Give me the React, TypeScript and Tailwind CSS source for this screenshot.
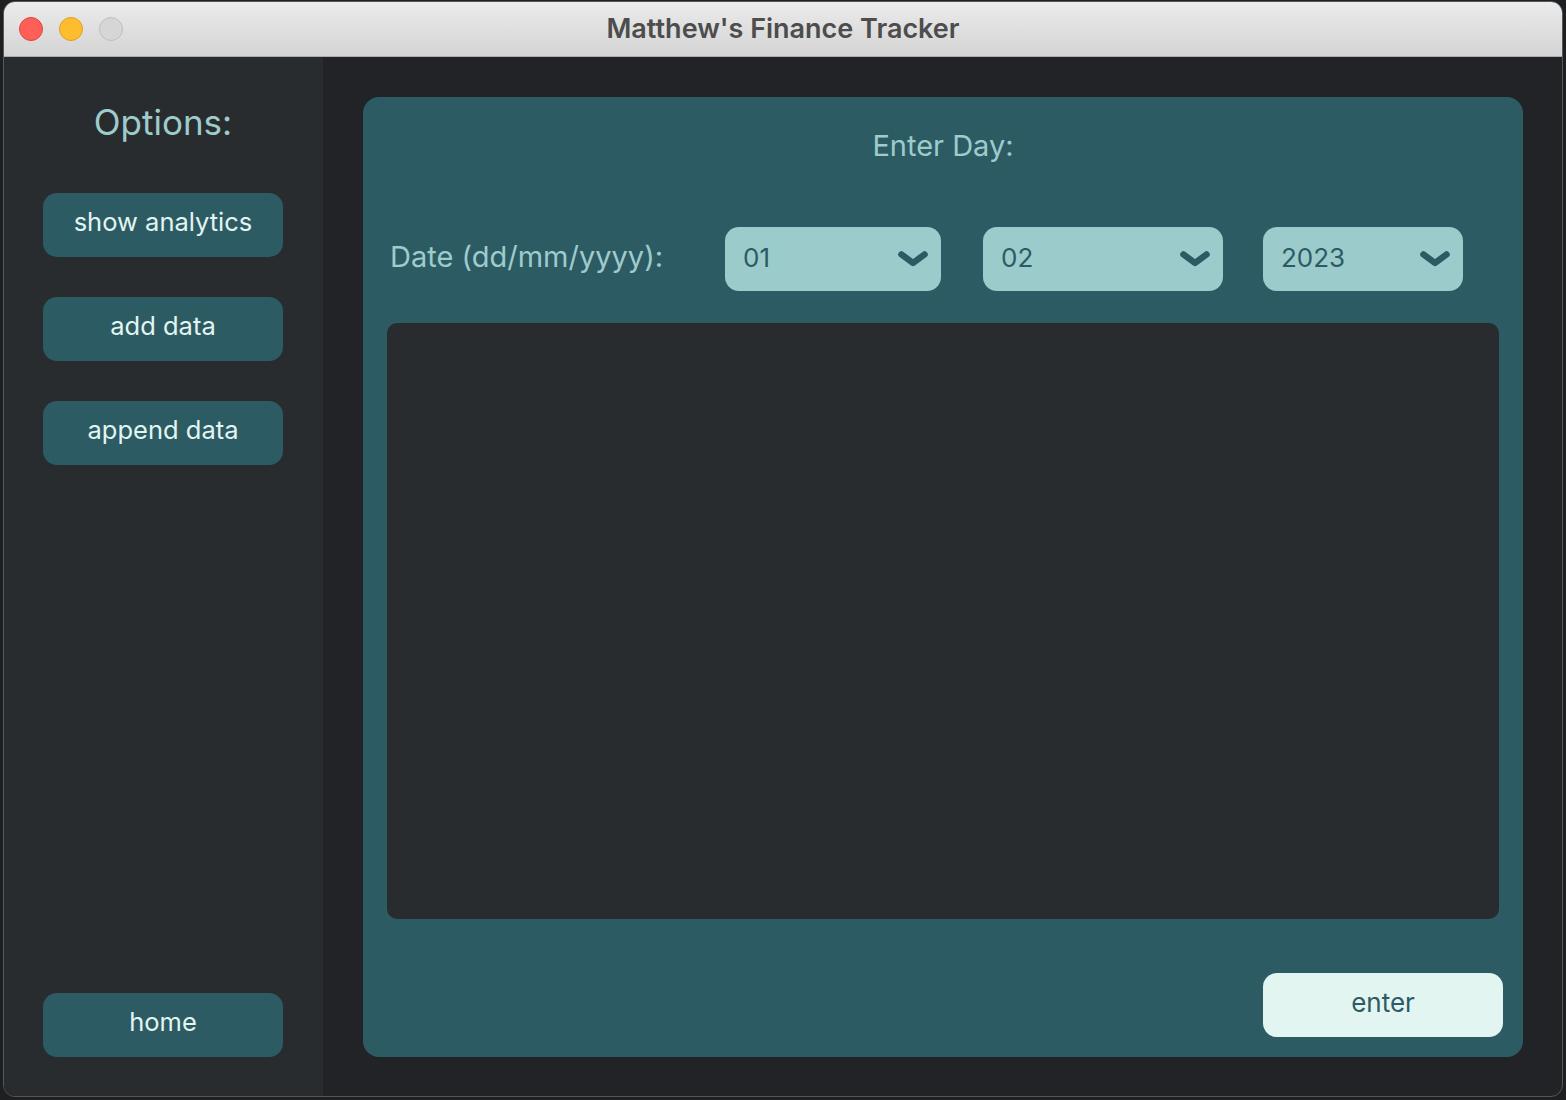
import React from 'react';

const font = { fontFamily: 'Inter, "Noto Sans", sans-serif' };

function Chevron() {
  return (
    <svg width="32" height="18" viewBox="0 0 32 18" fill="none">
      <path d="M4.5 4.5l11.5 8.5 11.5-8.5" stroke="#2d5b64" strokeWidth="6.5" strokeLinecap="round" strokeLinejoin="round" />
    </svg>
  );
}

function Select({ value, width }: { value: string; width: string }) {
  return (
    <div className={`flex h-16 ${width} items-center justify-between rounded-[14px] bg-[#9ccbcc] pl-[18px] pr-[12px]`}>
      <span className="pb-[3px] text-[26px] text-[#2d5b64]">{value}</span>
      <Chevron />
    </div>
  );
}

function SideButton({ label }: { label: string }) {
  return (
    <button className="flex h-16 w-[240px] items-center justify-center rounded-[14px] bg-[#2d5b64] pb-[6px] text-[25.5px] text-[#e2f5f1]">
      {label}
    </button>
  );
}

export default function App() {
  return (
    <div className="h-[1100px] w-[1566px] bg-[#1d1f21] pt-[1px] pl-[3px] pr-[3px] pb-[3px]" style={font}>
      <div className="flex h-full w-full flex-col overflow-hidden rounded-[12px] border border-[#555759] bg-[#212326]">
        <div className="relative flex h-[55px] shrink-0 items-center justify-center border-b border-[#adadad] bg-gradient-to-b from-[#ebebeb] to-[#d4d4d4]">
          <div className="absolute left-[15px] top-[15px] flex gap-4">
            <span className="h-6 w-6 rounded-full border border-[#e0443e] bg-[#fe5f57]" />
            <span className="h-6 w-6 rounded-full border border-[#dea123] bg-[#febc2e]" />
            <span className="h-6 w-6 rounded-full border border-[#bfbfbf] bg-[#d6d6d6]" />
          </div>
          <span className="text-[27px] font-semibold text-[#4d4d4d]">Matthew's Finance Tracker</span>
        </div>
        <div className="flex min-h-0 flex-1">
          <div className="flex w-[319px] shrink-0 flex-col items-center bg-[#292c2e] pr-[1px] pb-[39px]">
            <div className="mt-[43px] text-[35px] leading-[44px] text-[#9ecbcc]">Options:</div>
            <div className="mt-[49px] flex flex-col gap-10">
              <SideButton label="show analytics" />
              <SideButton label="add data" />
              <SideButton label="append data" />
            </div>
            <div className="flex-1" />
            <SideButton label="home" />
          </div>
          <div className="flex-1 py-10 pl-10 pr-[39px] pb-[39px]">
            <div className="flex h-full flex-col rounded-[16px] bg-[#2d5b64] px-6 pb-5">
              <div className="mt-[30px] text-center text-[29px] leading-[38px] text-[#9ecbcc]">Enter Day:</div>
              <div className="mt-[62px] flex items-center">
                <span className="ml-[3px] w-[335px] pb-[4px] text-[29px] text-[#9ecbcc]">Date (dd/mm/yyyy):</span>
                <Select value="01" width="w-[216px]" />
                <div className="ml-[42px]">
                  <Select value="02" width="w-[240px]" />
                </div>
                <div className="ml-10">
                  <Select value="2023" width="w-[200px]" />
                </div>
              </div>
              <div className="mt-8 h-[596px] rounded-[10px] bg-[#292c2e]" />
              <div className="flex-1" />
              <div className="flex justify-end -mr-1">
                <button className="flex h-16 w-[240px] items-center justify-center rounded-[14px] bg-[#e2f5f1] pb-[6px] text-[26px] text-[#2d5b64]">
                  enter
                </button>
              </div>
            </div>
          </div>
        </div>
      </div>
    </div>
  );
}
